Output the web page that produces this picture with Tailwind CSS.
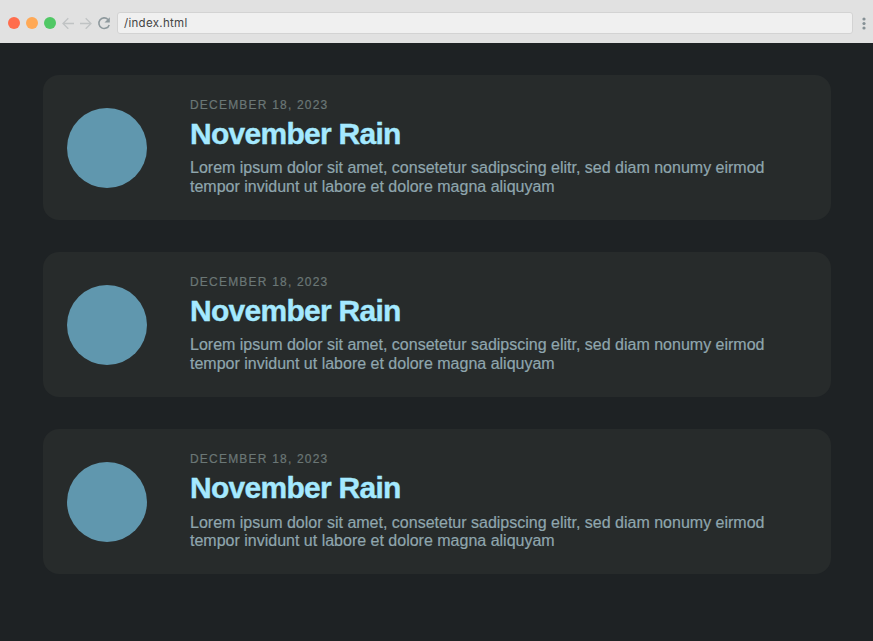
<!DOCTYPE html>
<html lang="en">
<head>
<meta charset="utf-8">
<title>index.html</title>
<script src="https://cdn.jsdelivr.net/npm/@tailwindcss/browser@4"></script>
</head>
<body class="flex h-screen flex-col overflow-hidden bg-[#1e2224] font-['Liberation_Sans',sans-serif]">
<header class="flex h-[43px] shrink-0 items-center bg-[#e1e1e1] pt-[3px] pl-2">
  <div class="flex gap-1.5">
    <span class="size-3 rounded-full bg-[#ff6d4d]"></span>
    <span class="size-3 rounded-full bg-[#ffa956]"></span>
    <span class="size-3 rounded-full bg-[#50c865]"></span>
  </div>
  <svg class="ml-1.5 h-3 w-[30px]" viewBox="0 0 30 12" fill="none" stroke="#c0c3c4" stroke-width="1.3"><path d="M12 6.5H1M6.3 1.200L1 6.500l5.300 5.300M18 6.500h11M23.700 1.200L29 6.500l-5.300 5.300"/></svg>
  <svg class="ml-[5px] size-[14px]" viewBox="0 0 14 14" fill="none"><path d="M11 3.500A5.300 5.300 0 1 0 12.200 8.900" stroke="#8e999d" stroke-width="1.600"/><path d="M12.800 1.200v5.300H7.500z" fill="#8e999d"/></svg>
  <div class="ml-[6px] flex h-[22px] w-[736px] items-center rounded-[3px] border border-[#d3d3d3] bg-[#f0f0f0] pt-[2px] pl-[6px] font-['Inter',sans-serif] text-[11.5px] leading-none tracking-[0.3px] text-[#444]">/index.html</div>
  <svg class="ml-[9px] h-[13px] w-1" viewBox="0 0 4 13" fill="#859095"><circle cx="2" cy="2" r="1.600"/><circle cx="2" cy="6.500" r="1.600"/><circle cx="2" cy="11" r="1.600"/></svg>
</header>
<main class="flex flex-col gap-8 pt-8 pr-[42px] pl-[43px]">
  <article class="flex h-[145px] items-center gap-[43px] rounded-2xl bg-[#272b2b] pl-6">
    <div class="mt-px size-20 shrink-0 rounded-full bg-[#6097ae]"></div>
    <div class="w-[600px]">
      <p class="text-[12px] leading-[14px] tracking-[1.200px] text-[#6b7776] [-webkit-text-stroke:0.2px]">DECEMBER 18, 2023</p>
      <h2 class="mt-[5px] text-[30px] leading-[34px] font-bold tracking-[-0.720px] text-[#a4e9ff] [-webkit-text-stroke:0.4px]">November Rain</h2>
      <p class="mt-[7px] pb-px text-[16px] leading-[19px] text-[#8fa6ae] [-webkit-text-stroke:0.2px]">Lorem ipsum dolor sit amet, consetetur sadipscing elitr, sed diam nonumy eirmod<br>tempor invidunt ut labore et dolore magna aliquyam</p>
    </div>
  </article>
  <article class="flex h-[145px] items-center gap-[43px] rounded-2xl bg-[#272b2b] pl-6">
    <div class="mt-px size-20 shrink-0 rounded-full bg-[#6097ae]"></div>
    <div class="w-[600px]">
      <p class="text-[12px] leading-[14px] tracking-[1.200px] text-[#6b7776] [-webkit-text-stroke:0.2px]">DECEMBER 18, 2023</p>
      <h2 class="mt-[5px] text-[30px] leading-[34px] font-bold tracking-[-0.720px] text-[#a4e9ff] [-webkit-text-stroke:0.4px]">November Rain</h2>
      <p class="mt-[7px] pb-px text-[16px] leading-[19px] text-[#8fa6ae] [-webkit-text-stroke:0.2px]">Lorem ipsum dolor sit amet, consetetur sadipscing elitr, sed diam nonumy eirmod<br>tempor invidunt ut labore et dolore magna aliquyam</p>
    </div>
  </article>
  <article class="flex h-[145px] items-center gap-[43px] rounded-2xl bg-[#272b2b] pl-6">
    <div class="mt-px size-20 shrink-0 rounded-full bg-[#6097ae]"></div>
    <div class="w-[600px]">
      <p class="text-[12px] leading-[14px] tracking-[1.200px] text-[#6b7776] [-webkit-text-stroke:0.2px]">DECEMBER 18, 2023</p>
      <h2 class="mt-[5px] text-[30px] leading-[34px] font-bold tracking-[-0.720px] text-[#a4e9ff] [-webkit-text-stroke:0.4px]">November Rain</h2>
      <p class="mt-[9px] pb-px text-[16px] leading-[18px] text-[#8fa6ae] [-webkit-text-stroke:0.2px]">Lorem ipsum dolor sit amet, consetetur sadipscing elitr, sed diam nonumy eirmod<br>tempor invidunt ut labore et dolore magna aliquyam</p>
    </div>
  </article>
</main>
</body>
</html>
